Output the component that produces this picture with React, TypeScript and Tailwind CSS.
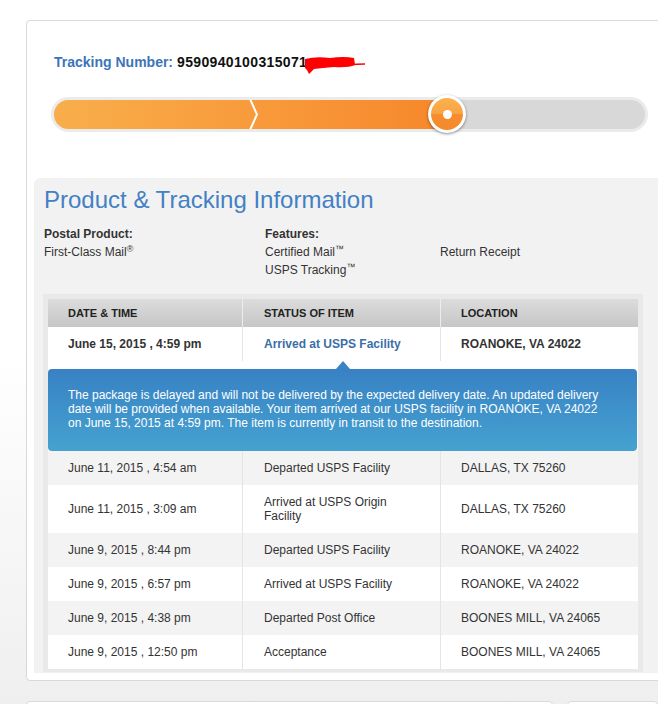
import React from "react";

type Row = { date: string; status: React.ReactNode; location: string; tall?: boolean };

const rows: Row[] = [
  { date: "June 11, 2015 , 4:54 am", status: "Departed USPS Facility", location: "DALLAS, TX 75260" },
  {
    date: "June 11, 2015 , 3:09 am",
    status: (
      <>
        Arrived at USPS Origin
        <br />
        Facility
      </>
    ),
    location: "DALLAS, TX 75260",
    tall: true,
  },
  { date: "June 9, 2015 , 8:44 pm", status: "Departed USPS Facility", location: "ROANOKE, VA 24022" },
  { date: "June 9, 2015 , 6:57 pm", status: "Arrived at USPS Facility", location: "ROANOKE, VA 24022" },
  { date: "June 9, 2015 , 4:38 pm", status: "Departed Post Office", location: "BOONES MILL, VA 24065" },
  { date: "June 9, 2015 , 12:50 pm", status: "Acceptance", location: "BOONES MILL, VA 24065" },
];

function ProgressBar() {
  return (
    <div className="relative ml-[24px] mt-[27px] h-[35px] w-[597px] rounded-full bg-[#ebebeb] p-[3px]">
      <div className="relative h-full w-full overflow-hidden rounded-full bg-[#d8d8d8]">
        <div className="h-full w-[386px] bg-gradient-to-r from-[#f9ae4b] to-[#f6882b]" />
        {/* white chevron between the two filled steps */}
        <svg className="absolute left-[193px] top-0" width="14" height="29" viewBox="0 0 14 29">
          <path d="M3 -1 L10 14.5 L3 30" fill="none" stroke="#ffffff" strokeWidth="2" />
        </svg>
      </div>
      <div className="absolute left-[377px] top-[-2px] h-[38px] w-[38px] rounded-full bg-white p-[3px] shadow-[0_1px_3px_rgba(0,0,0,0.45)]">
        <div className="flex h-full w-full items-center justify-center rounded-full bg-[linear-gradient(to_bottom,#fbb24f_0%,#f9a544_48%,#f68c2e_52%,#f58a2c_100%)]">
          <div className="h-[9px] w-[9px] rounded-full bg-white" />
        </div>
      </div>
    </div>
  );
}

export default function App() {
  return (
    <div className="h-[704px] w-[658px] overflow-hidden bg-gradient-to-b from-white via-white to-[#efefef] pt-[20px] font-['Liberation_Sans',Arial,sans-serif] text-[#333]">
      <div className="ml-[26px] h-[661px] w-[700px] rounded-[4px] border border-[#d9d9d9] bg-white">
        <div className="flex h-[49px] items-end pl-[27px] text-[14px] font-bold leading-[16px]">
          <span className="text-[#3b74b9]">Tracking Number:</span>
          <span className="ml-[4px] tracking-[0.35px] text-[#111]">9590940100315071</span>
          {/* red redaction scribble over the end of the number */}
          <svg width="62" height="18" viewBox="0 0 62 18" className="-mb-[4px] -ml-[3px] overflow-visible">
            <path
              d="M1 3 Q12 0 26 2 Q40 0 50 2 L51 9 Q44 12 30 11 Q18 12 10 13 L5 18 L3 14 L1 12 Z"
              fill="#ff0000"
            />
            <path d="M46 8.5 L61 8" stroke="#ff0000" strokeWidth="1.6" />
          </svg>
        </div>

        <ProgressBar />

        <div className="ml-[7px] mt-[46px] h-[495px] rounded-tl-[6px] bg-[#f3f2f3]">
          <h1 className="ml-[10px] pt-[8px] text-[24px] font-normal leading-[28px] text-[#4281c4]">
            Product &amp; Tracking Information
          </h1>

          <div className="ml-[10px] mt-[11px] flex text-[12px] leading-[18px]">
            <div className="w-[221px]">
              <div className="font-bold">Postal Product:</div>
              <div>
                First-Class Mail<sup className="text-[9px]">®</sup>
              </div>
            </div>
            <div className="w-[175px]">
              <div className="font-bold">Features:</div>
              <div>
                Certified Mail<sup className="text-[9px]">™</sup>
              </div>
              <div>
                USPS Tracking<sup className="text-[9px]">™</sup>
              </div>
            </div>
            <div className="pt-[18px]">Return Receipt</div>
          </div>

          <div className="ml-[9px] mt-[15px] w-[600px] bg-[#e9e9e9] px-[5px] pb-[3px] pt-[5px]">
            <div className="flex h-[28px] bg-gradient-to-b from-[#dcdcdc] to-[#c6c6c6] text-[11px] font-bold uppercase leading-[28px] text-[#222]">
              <div className="w-[195px] border-r border-[#ececec] pl-[20px]">Date &amp; Time</div>
              <div className="w-[198px] border-r border-[#ececec] pl-[21px]">Status of Item</div>
              <div className="w-[197px] pl-[20px]">Location</div>
            </div>

            <div className="flex h-[34px] items-center bg-white text-[12px] font-bold">
              <div className="flex h-full w-[195px] items-center border-r border-[#e4e4e4] pl-[20px]">
                June 15, 2015 , 4:59 pm
              </div>
              <div className="flex h-full w-[198px] items-center border-r border-[#e4e4e4] pl-[21px] text-[#3a6ea8]">
                Arrived at USPS Facility
              </div>
              <div className="flex h-full w-[197px] items-center pl-[20px]">ROANOKE, VA 24022</div>
            </div>

            <div className="relative bg-white pt-[8px]">
              <div className="absolute left-[288px] top-0 h-0 w-0 border-x-[7px] border-b-[8px] border-x-transparent border-b-[#3a83c4]" />
              <div className="h-[82px] w-[589px] rounded-[4px] bg-gradient-to-b from-[#3881c4] to-[#45a2d0] pl-[20px] pt-[19px] text-[12px] leading-[14px] text-white">
                The package is delayed and will not be delivered by the expected delivery date. An updated delivery
                <br />
                date will be provided when available. Your item arrived at our USPS facility in ROANOKE, VA 24022
                <br />
                on June 15, 2015 at 4:59 pm. The item is currently in transit to the destination.
              </div>
            </div>

            {rows.map((r, i) => (
              <div
                key={i}
                className={`flex text-[12px] leading-[14px] ${r.tall ? "h-[48px]" : "h-[34px]"} ${
                  i % 2 === 0 ? "bg-[#f3f3f3]" : "bg-white"
                }`}
              >
                <div className="flex h-full w-[195px] items-center border-r border-[#e4e4e4] pl-[20px]">{r.date}</div>
                <div className="flex h-full w-[198px] items-center border-r border-[#e4e4e4] pl-[21px]">
                  <span>{r.status}</span>
                </div>
                <div className="flex h-full w-[197px] items-center pl-[20px]">{r.location}</div>
              </div>
            ))}
          </div>
        </div>
      </div>

      <div className="mt-[20px] flex">
        <div className="ml-[26px] h-[20px] w-[583px] rounded-t-[4px] border border-[#d9d9d9] bg-white" />
        <div className="ml-[14px] h-[20px] w-[100px] rounded-t-[4px] border border-[#d9d9d9] bg-white" />
      </div>
    </div>
  );
}
